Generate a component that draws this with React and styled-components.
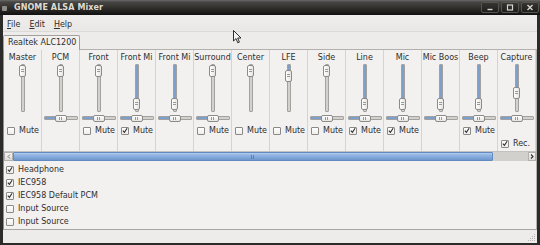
import React from 'react';
import styled, { createGlobalStyle } from 'styled-components';

const Global = createGlobalStyle`
  html, body { margin: 0; padding: 0; background: #1c1c1c; }
  body { font-family: "DejaVu Sans", "Liberation Sans", sans-serif; font-size: 8px; color: #2e2e2e; }
  * { box-sizing: border-box; }
`;

const Window = styled.div`
  position: relative;
  width: 540px;
  height: 245px;
  display: flex;
  flex-direction: column;
  overflow: hidden;
  background: #1c1c1c;
`;

const TitleBar = styled.div`
  flex: none;
  height: 15px;
  display: flex;
  align-items: center;
  padding: 0 1px 0 1px;
  background: linear-gradient(#6a6a68 0px, #474644 2px, #34332f 7px, #232220 11px, #101010 15px);
`;

const TitleIcon = styled.div`
  width: 5px;
  height: 5px;
  margin: 1px 7px 0 1px;
  background: #8d8c88;
  border-radius: 1px;
`;

const TitleText = styled.span`
  font-weight: bold;
  font-size: 8px;
  color: #dfdbd2;
  letter-spacing: 0.1px;
`;

const WinButtons = styled.div`
  margin-left: auto;
  display: flex;
  gap: 2px;
`;

const WinButton = styled.div`
  width: 18px;
  height: 11px;
  border: 1px solid #55544f;
  border-radius: 2px;
  background: linear-gradient(#363532, #1d1d1c);
  display: flex;
  align-items: center;
  justify-content: center;
`;

const Frame = styled.div`
  flex: 1;
  display: flex;
  flex-direction: column;
  border-left: 3px solid #2b2b29;
  border-right: 3px solid #2b2b29;
  border-bottom: 2px solid #2b2b29;
  background: #edeceb;
  min-height: 0;
`;

const MenuBar = styled.div`
  flex: none;
  height: 17px;
  display: flex;
  align-items: center;
  gap: 9px;
  padding: 2px 0 0 4px;
  background: linear-gradient(#efeeec, #e9e8e6);
  border-bottom: 1px solid #dcdad6;
`;

const MenuItem = styled.span`
  font-size: 8px;
  color: #2e2e2e;
  & u { text-decoration: underline; text-underline-offset: 1px; }
`;

const TabRow = styled.div`
  flex: none;
  height: 17px;
  display: flex;
  align-items: flex-end;
  background: #edeceb;
`;

const Tab = styled.div`
  height: 15px;
  padding: 2px 3px 0 4px;
  border: 1px solid #a3a19d;
  border-bottom: none;
  border-radius: 2px 2px 0 0;
  background: #f2f1f0;
  white-space: nowrap;
  margin-bottom: -1px;
  position: relative;
  z-index: 1;
`;

const Page = styled.div`
  flex: 1;
  display: flex;
  flex-direction: column;
  border-top: 1px solid #b3b1ad;
  border-left: 1px solid #8f8d89;
  border-bottom: 1px solid #a9a7a3;
  border-right: 1px solid #b3b1ad;
  background: #f2f1f0;
  min-height: 0;
`;

const Mixer = styled.div`
  flex: none;
  height: 101px;
  display: grid;
  grid-template-columns: repeat(14, 1fr);
`;

const Channel = styled.div`
  display: flex;
  flex-direction: column;
  border-right: 1px solid #d6d4d0;
  min-width: 0;
  padding-bottom: 1px;
`;

const ChannelLabel = styled.div`
  height: 13px;
  line-height: 13px;
  text-align: center;
  white-space: nowrap;
  overflow: hidden;
  padding-top: 1px;
`;

const VSlider = styled.div`
  position: relative;
  height: 48px;
  margin-top: 1px;
  display: flex;
  justify-content: center;
`;

const VTrough = styled.div`
  position: relative;
  width: 4px;
  height: 100%;
  border: 1px solid #a3a19d;
  border-radius: 1px;
  background: #d3d1cd;
  overflow: hidden;
`;

const VFill = styled.div`
  position: absolute;
  top: 0;
  left: 0;
  right: 0;
  background: #7c9fcd;
`;

const VThumb = styled.div`
  position: absolute;
  left: 50%;
  width: 7px;
  height: 12px;
  margin-left: -3.5px;
  border: 1px solid #8d8b87;
  border-radius: 2px;
  background: linear-gradient(90deg, #ffffff, #e6e5e2);
  &::after {
    content: '';
    position: absolute;
    left: 1px;
    right: 1px;
    top: 3px;
    height: 4px;
    background: repeating-linear-gradient(#9b9995 0 1px, transparent 1px 2px);
  }
`;

const BalanceSlot = styled.div`
  height: 12px;
  display: flex;
  align-items: center;
  justify-content: center;
`;

const HSlider = styled.div`
  position: relative;
  width: 34px;
  height: 7px;
`;

const HTrough = styled.div`
  position: absolute;
  left: 0;
  right: 0;
  top: 1.5px;
  height: 4px;
  border: 1px solid #a3a19d;
  border-radius: 1px;
  background: #d3d1cd;
  overflow: hidden;
`;

const HFill = styled.div`
  position: absolute;
  left: 0;
  top: 0;
  bottom: 0;
  width: 50%;
  background: #7c9fcd;
`;

const HThumb = styled.div`
  position: absolute;
  top: 0;
  left: 11px;
  width: 12px;
  height: 7px;
  border: 1px solid #8d8b87;
  border-radius: 2px;
  background: linear-gradient(#ffffff, #e6e5e2);
  &::after {
    content: '';
    position: absolute;
    top: 1px;
    bottom: 1px;
    left: 3px;
    width: 4px;
    background: repeating-linear-gradient(90deg, #9b9995 0 1px, transparent 1px 2px);
  }
`;

const CheckRow = styled.div`
  height: 13px;
  display: flex;
  align-items: center;
  gap: 4px;
  padding-left: ${p => p.$indent || 3}px;
  white-space: nowrap;
`;

const BoxWrap = styled.span`
  flex: none;
  width: 8px;
  height: 8px;
  border: 1px solid #8b8985;
  border-radius: 1px;
  background: linear-gradient(#ffffff, #eeedeb);
  display: flex;
  align-items: center;
  justify-content: center;
`;

const HScroll = styled.div`
  flex: none;
  height: 10px;
  display: flex;
  background: #d2d0cc;
  border-top: 1px solid #c4c2be;
`;

const ScrollButton = styled.div`
  flex: none;
  width: ${p => p.$w}px;
  display: flex;
  align-items: center;
  justify-content: center;
  background: linear-gradient(#f4f3f1, #dedcd8);
  border: 1px solid #b3b1ad;
  color: #4a4946;
`;

const ScrollTrack = styled.div`
  flex: 1;
  display: flex;
  align-items: stretch;
`;

const ScrollThumb = styled.div`
  width: 93.2%;
  display: flex;
  align-items: center;
  justify-content: center;
  border: 1px solid #6189c2;
  border-radius: 1px;
  background: linear-gradient(#b4cdec 0, #93b5e2 30%, #7ea4d8 70%, #6f97cf 100%);
`;

const Grip = styled.div`
  width: 4px;
  height: 4px;
  background: repeating-linear-gradient(90deg, #4e76ae 0 1px, transparent 1px 2px);
  opacity: 0.8;
`;

const SwitchList = styled.div`
  flex: 1;
  display: flex;
  flex-direction: column;
  padding-top: 2px;
`;

const StatusBar = styled.div`
  flex: none;
  height: 13px;
  display: flex;
  justify-content: flex-end;
  align-items: flex-end;
  padding: 0 1px 1px 0;
  background: #edeceb;
`;

const Cursor = styled.svg`
  position: absolute;
  left: 233px;
  top: 30px;
  width: 9px;
  height: 14px;
  pointer-events: none;
`;

const Check = ({ on }) => (
  <BoxWrap>
    {on && (
      <svg width="7" height="7" viewBox="0 0 7 7">
        <path d="M1 3.6 L2.8 5.6 L6 0.8" fill="none" stroke="#2f2f2f" strokeWidth="1.3" />
      </svg>
    )}
  </BoxWrap>
);

const channels = [
  { name: 'Master', v: 1, bal: false, mute: false },
  { name: 'PCM', v: 1, bal: true },
  { name: 'Front', v: 1, bal: true, mute: false },
  { name: 'Front Mi', v: 0, bal: true, mute: true },
  { name: 'Front Mi', v: 0, bal: true },
  { name: 'Surround', v: 1, bal: true, mute: false },
  { name: 'Center', v: 1, bal: false, mute: false },
  { name: 'LFE', v: 0.85, bal: false, mute: false },
  { name: 'Side', v: 1, bal: true, mute: false },
  { name: 'Line', v: 0, bal: true, mute: true },
  { name: 'Mic', v: 0, bal: true, mute: true },
  { name: 'Mic Boos', v: 0, bal: true },
  { name: 'Beep', v: 0, bal: true, mute: true },
  { name: 'Capture', v: 0.33, bal: true, rec: true },
];

const switches = [
  { label: 'Headphone', on: true },
  { label: 'IEC958', on: true },
  { label: 'IEC958 Default PCM', on: true },
  { label: 'Input Source', on: false },
  { label: 'Input Source', on: false },
];

function ChannelStrip({ ch }) {
  const thumbTop = 1 + (1 - ch.v) * 33;
  return (
    <Channel>
      <ChannelLabel>{ch.name}</ChannelLabel>
      <VSlider>
        <VTrough>
          <VFill style={{ height: thumbTop + 5 }} />
        </VTrough>
        <VThumb style={{ top: thumbTop }} />
      </VSlider>
      <BalanceSlot>
        {ch.bal && (
          <HSlider>
            <HTrough><HFill /></HTrough>
            <HThumb />
          </HSlider>
        )}
      </BalanceSlot>
      <CheckRow>
        {ch.mute !== undefined && (<><Check on={ch.mute} /><span>Mute</span></>)}
      </CheckRow>
      <CheckRow>
        {ch.rec && (<><Check on /><span>Rec.</span></>)}
      </CheckRow>
    </Channel>
  );
}

export default function App() {
  return (
    <>
      <Global />
      <Window>
        <TitleBar>
          <TitleIcon />
          <TitleText>GNOME ALSA Mixer</TitleText>
          <WinButtons>
            <WinButton>
              <svg width="8" height="7" viewBox="0 0 8 7"><path d="M1.5 5.5 H6.5" stroke="#d8d5ce" strokeWidth="1.4" /></svg>
            </WinButton>
            <WinButton>
              <svg width="8" height="7" viewBox="0 0 8 7"><rect x="1.5" y="1" width="5" height="5" fill="none" stroke="#d8d5ce" strokeWidth="1.2" /></svg>
            </WinButton>
            <WinButton>
              <svg width="8" height="7" viewBox="0 0 8 7"><path d="M1.5 1 L6.5 6 M6.5 1 L1.5 6" stroke="#d8d5ce" strokeWidth="1.4" /></svg>
            </WinButton>
          </WinButtons>
        </TitleBar>
        <Frame>
          <MenuBar>
            <MenuItem><u>F</u>ile</MenuItem>
            <MenuItem><u>E</u>dit</MenuItem>
            <MenuItem><u>H</u>elp</MenuItem>
          </MenuBar>
          <TabRow>
            <Tab>Realtek ALC1200</Tab>
          </TabRow>
          <Page>
            <Mixer>
              {channels.map((ch, i) => <ChannelStrip key={i} ch={ch} />)}
            </Mixer>
            <HScroll>
              <ScrollButton $w={9}>
                <svg width="4" height="5" viewBox="0 0 4 5"><path d="M3 0.5 L1 2.5 L3 4.5" fill="none" stroke="#7a7874" strokeWidth="1" /></svg>
              </ScrollButton>
              <ScrollTrack>
                <ScrollThumb><Grip /></ScrollThumb>
              </ScrollTrack>
              <ScrollButton $w={8}>
                <svg width="4" height="5" viewBox="0 0 4 5"><path d="M1 0.5 L3 2.5 L1 4.5" fill="none" stroke="#2f2f2f" strokeWidth="1.1" /></svg>
              </ScrollButton>
            </HScroll>
            <SwitchList>
              {switches.map((s, i) => (
                <CheckRow key={i} $indent={2}>
                  <Check on={s.on} />
                  <span>{s.label}</span>
                </CheckRow>
              ))}
            </SwitchList>
          </Page>
          <StatusBar>
            <svg width="8" height="8" viewBox="0 0 8 8">
              <g fill="#b9b7b3">
                <rect x="6" y="0" width="1" height="1" />
                <rect x="4" y="2" width="1" height="1" /><rect x="6" y="2" width="1" height="1" />
                <rect x="2" y="4" width="1" height="1" /><rect x="4" y="4" width="1" height="1" /><rect x="6" y="4" width="1" height="1" />
                <rect x="0" y="6" width="1" height="1" /><rect x="2" y="6" width="1" height="1" /><rect x="4" y="6" width="1" height="1" /><rect x="6" y="6" width="1" height="1" />
              </g>
            </svg>
          </StatusBar>
        </Frame>
        <Cursor viewBox="0 0 9 14">
          <path d="M0.5 0.5 L0.5 11 L3 8.6 L4.8 12.8 L6.4 12.1 L4.7 8 L8 8 Z" fill="#f4f4f4" stroke="#1a1a1a" strokeWidth="0.9" strokeLinejoin="round" />
        </Cursor>
      </Window>
    </>
  );
}
